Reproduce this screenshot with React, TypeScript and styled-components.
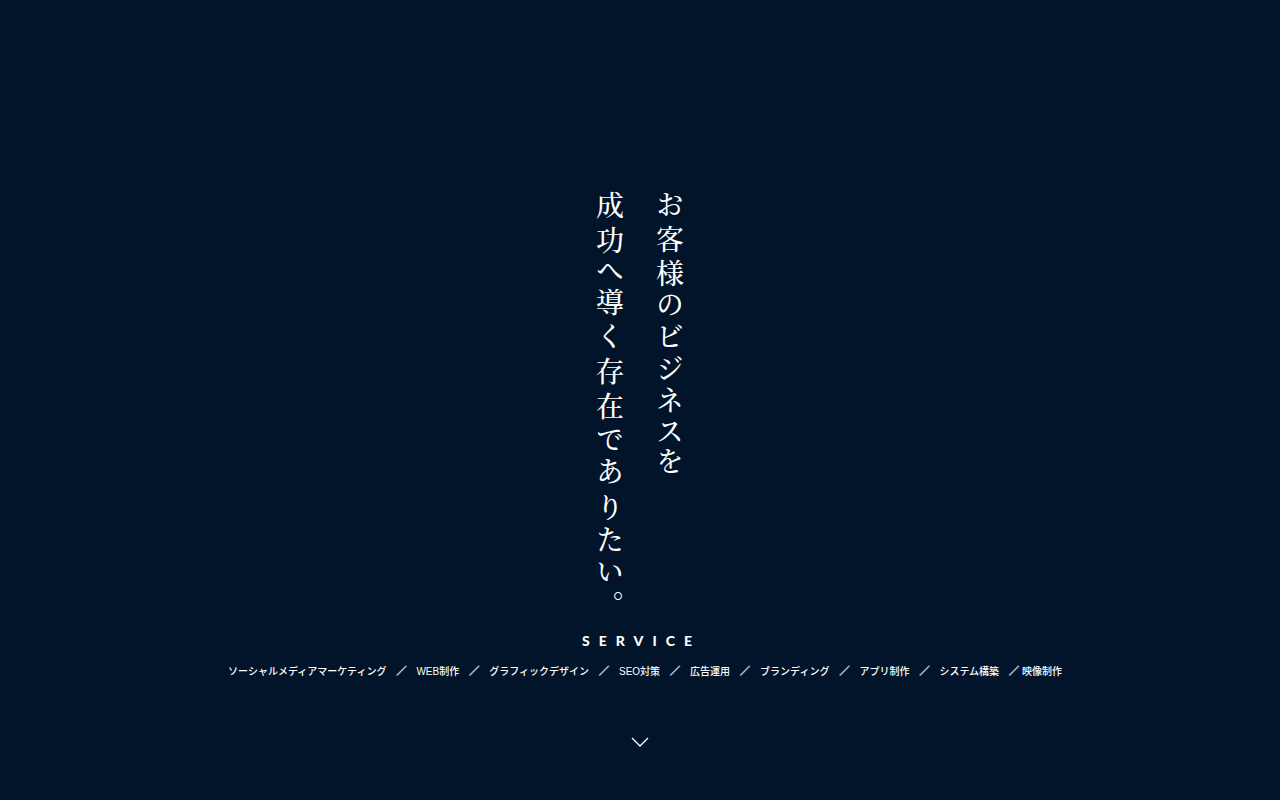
import React from "react";
import styled, { createGlobalStyle } from "styled-components";

const GlobalStyle = createGlobalStyle`
  *, *::before, *::after { box-sizing: border-box; }
  body {
    margin: 0;
    background: #021429;
    color: #fff;
    font-family: "Liberation Sans", "Noto Sans CJK JP", sans-serif;
  }
`;

const Hero = styled.main`
  min-height: 100vh;
  padding: 191px 24px 48px;
  display: flex;
  flex-direction: column;
  align-items: center;
`;

const Catchphrase = styled.h1`
  margin: 0;
  height: 432px;
  writing-mode: vertical-rl;
  white-space: nowrap;
  font-family: "Noto Serif CJK JP", "Noto Serif JP", "Noto Sans CJK JP", serif;
  font-weight: 500;
  font-size: 28px;
  line-height: 60px;
  font-feature-settings: "vpal", "vkrn";
`;

const Line = styled.span<{ $tracking: number }>`
  display: block;
  letter-spacing: ${({ $tracking }) => $tracking}px;
`;

const ServiceTitle = styled.h2`
  margin: 8px 0 0;
  padding-left: 3px;
  font-family: Lato, sans-serif;
  font-weight: 900;
  font-size: 14px;
  line-height: 20px;
  letter-spacing: 9px;
`;

const ServiceList = styled.ul`
  margin: 11px 0 0;
  padding: 0 0 0 10px;
  list-style: none;
  display: flex;
  flex-wrap: wrap;
  justify-content: center;
  font-size: 10px;
  line-height: 20px;
  font-weight: 500;
`;

const Service = styled.li`
  white-space: pre;
`;

const Slash = styled.span`
  font-weight: 300;
  -webkit-text-stroke: 1px #aab4c0;
`;

const ScrollButton = styled.button`
  margin: 46px 0 0;
  padding: 8px;
  border: 0;
  background: none;
  color: inherit;
  cursor: pointer;
  line-height: 0;
`;

const services = [
  { name: "ソーシャルメディアマーケティング", separator: "　／　" },
  { name: "WEB制作", separator: "　／　" },
  { name: "グラフィックデザイン", separator: "　／　" },
  { name: "SEO対策", separator: "　／　" },
  { name: "広告運用", separator: "　／　" },
  { name: "ブランディング", separator: "　／　" },
  { name: "アプリ制作", separator: "　／　" },
  { name: "システム構築", separator: "　／ " },
  { name: "映像制作", separator: "" },
];

export default function App() {
  return (
    <>
      <GlobalStyle />
      <Hero lang="ja">
        <Catchphrase>
          <Line $tracking={6}>お客様のビジネスを</Line>
          <Line $tracking={7}>成功へ導く存在でありたい。</Line>
        </Catchphrase>
        <ServiceTitle>SERVICE</ServiceTitle>
        <ServiceList>
          {services.map(({ name, separator }) => (
            <Service key={name}>
              {name}
              {separator && <Slash>{separator}</Slash>}
            </Service>
          ))}
        </ServiceList>
        <ScrollButton type="button" aria-label="Scroll down">
          <svg width="18" height="12" viewBox="0 0 18 12" fill="none" stroke="currentColor" strokeWidth="1.3">
            <path d="M1 2 L9 10 L17 2" />
          </svg>
        </ScrollButton>
      </Hero>
    </>
  );
}
